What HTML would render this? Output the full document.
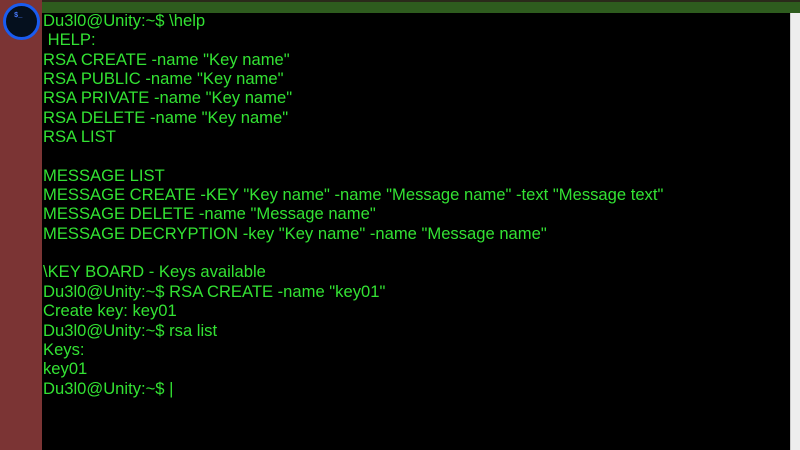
<!DOCTYPE html>
<html><head><style>
html,body{margin:0;padding:0;width:800px;height:450px;overflow:hidden;background:#000}
.top{position:absolute;left:0;top:0;width:800px;height:2px;background:#2a2a1a}
.bar{position:absolute;left:0;top:2px;width:800px;height:11px;background:#2e5c1e}
.side{position:absolute;left:0;top:0;width:42px;height:450px;background:#7b3434}
.circ{position:absolute;left:3px;top:3px;width:31px;height:31px;border-radius:50%;background:#05101e;border:3px solid #1a5cf0}
.circ span{position:absolute;left:8px;top:6px;color:#4a7cff;font:bold 7px "Liberation Mono",monospace}
.scroll{position:absolute;left:790px;top:13px;width:10px;height:437px;background:#eee;border-left:1px solid #ccc}
.txt{position:absolute;left:43px;top:11px;color:#33e233;font:16.6px/19.35px "Liberation Sans",sans-serif;white-space:pre;margin:0}
</style></head><body>
<div class="top"></div><div class="bar"></div>
<div class="side"></div>
<div class="circ"><span>$_</span></div>
<div class="scroll"></div>
<pre class="txt">Du3l0@Unity:~$ \help
 HELP:
RSA CREATE -name "Key name"
RSA PUBLIC -name "Key name"
RSA PRIVATE -name "Key name"
RSA DELETE -name "Key name"
RSA LIST

MESSAGE LIST
MESSAGE CREATE -KEY "Key name" -name "Message name" -text "Message text"
MESSAGE DELETE -name "Message name"
MESSAGE DECRYPTION -key "Key name" -name "Message name"

\KEY BOARD - Keys available
Du3l0@Unity:~$ RSA CREATE -name "key01"
Create key: key01
Du3l0@Unity:~$ rsa list
Keys:
key01
Du3l0@Unity:~$ |</pre>
</body></html>
